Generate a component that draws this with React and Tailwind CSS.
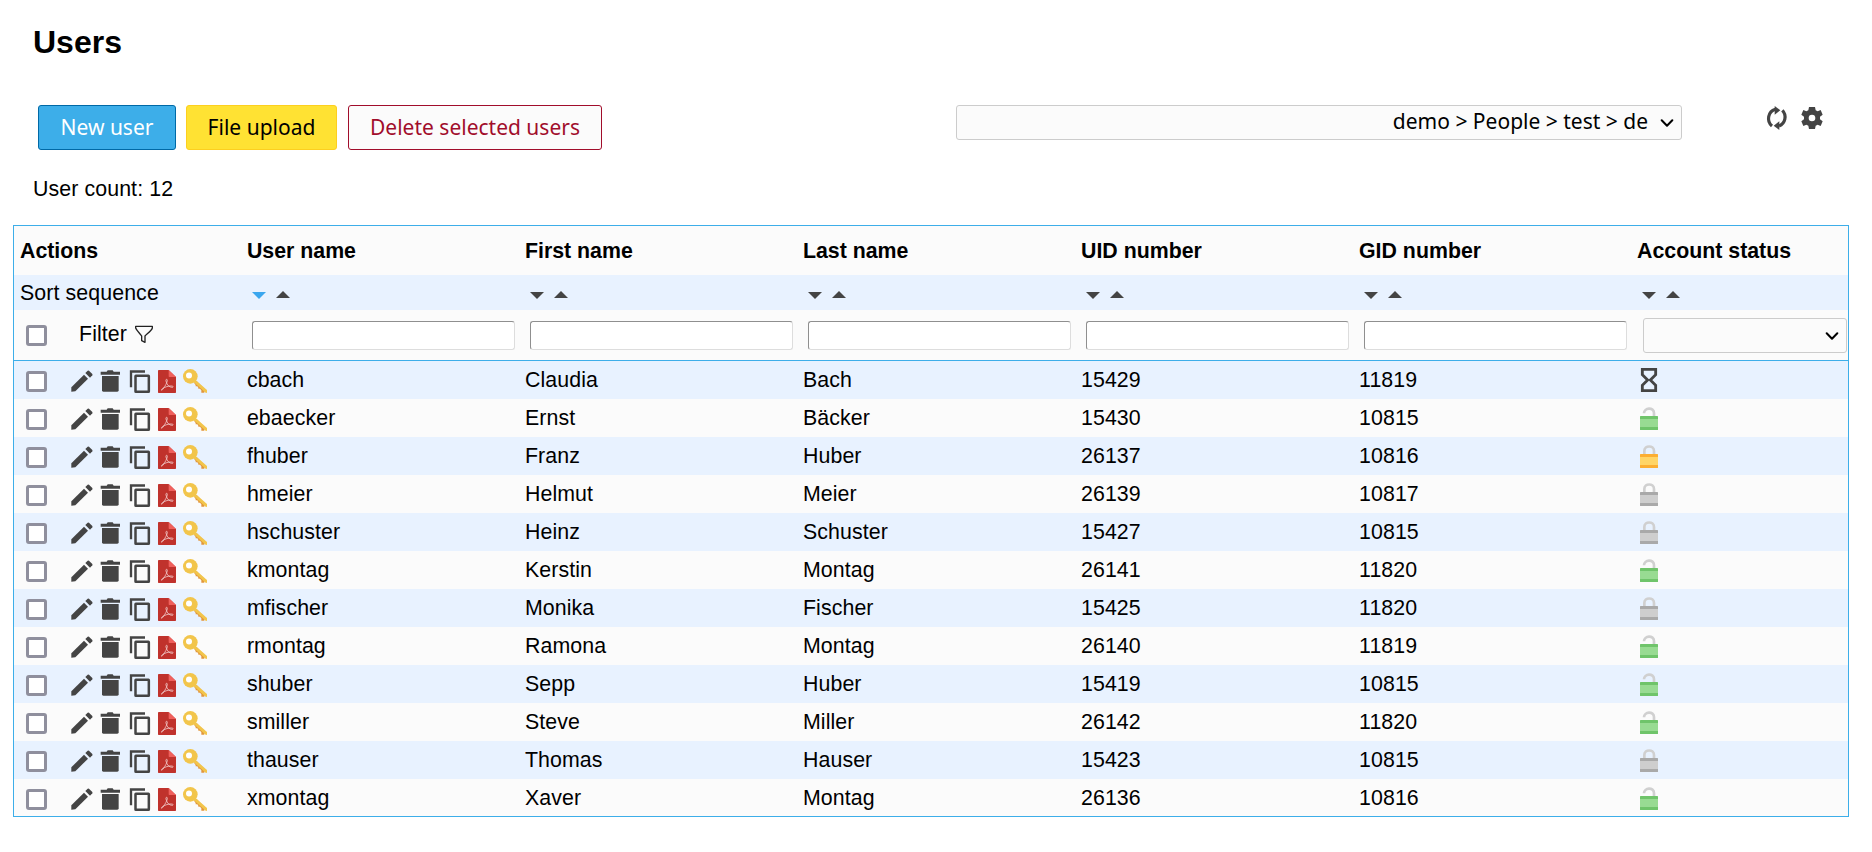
const USERS = [
  ["cbach", "Claudia", "Bach", "15429", "11819", "expired"],
  ["ebaecker", "Ernst", "Bäcker", "15430", "10815", "open"],
  ["fhuber", "Franz", "Huber", "26137", "10816", "partial"],
  ["hmeier", "Helmut", "Meier", "26139", "10817", "locked"],
  ["hschuster", "Heinz", "Schuster", "15427", "10815", "locked"],
  ["kmontag", "Kerstin", "Montag", "26141", "11820", "open"],
  ["mfischer", "Monika", "Fischer", "15425", "11820", "locked"],
  ["rmontag", "Ramona", "Montag", "26140", "11819", "open"],
  ["shuber", "Sepp", "Huber", "15419", "10815", "open"],
  ["smiller", "Steve", "Miller", "26142", "11820", "open"],
  ["thauser", "Thomas", "Hauser", "15423", "10815", "locked"],
  ["xmontag", "Xaver", "Montag", "26136", "10816", "open"],
];

const COLUMNS = ["User name", "First name", "Last name", "UID number", "GID number", "Account status"];

const GRID = "grid grid-cols-[226.3px_repeat(5,278.04px)_1fr]";

function Checkbox() {
  return <span className="block size-[21px] shrink-0 rounded-[3px] border-[3px] border-[#8f8f9d] bg-white" />;
}

function Pencil() {
  return (
    <svg className="size-7 shrink-0" viewBox="24 39 84 84" fill="#444">
      <path d="M34 97L72 59L84 71L46 109L34 110Z" />
      <path d="M76 54L83 47Q85 46 87 47L97 57Q98 59 97 61L90 68Z" />
    </svg>
  );
}

function Trash() {
  return (
    <svg className="size-7 shrink-0" viewBox="108 39 84 84" fill="#444">
      <path d="M122 50H140L143 46H158L161 50H180V59H122Z" />
      <path d="M126 63H176V106Q176 110 172 110H130Q126 110 126 106Z" />
    </svg>
  );
}

function Copy() {
  return (
    <svg className="size-7 shrink-0" viewBox="192 39 84 84" fill="none" stroke="#444">
      <path d="M213 97V49.5H255" strokeWidth="7" />
      <rect x="226.5" y="62.5" width="40" height="48" rx="1" strokeWidth="7.5" />
    </svg>
  );
}

function Pdf() {
  return (
    <svg className="size-7 shrink-0" viewBox="276 39 84 84">
      <path d="M294 47Q294 45 296 45H326L348 66V112Q348 114 346 114H296Q294 114 294 112Z" fill="#c0322c" />
      <path d="M326 45L348 66H328Q326 66 326 64Z" fill="#f0605c" />
      <path d="M320 73C316 73 318 80 321 86C323 91 329 97 337 97C341 97 340 93 335 93C327 92 314 96 307 101C301 106 305 108 309 102C315 94 322 82 322 76Q322 73 320 73Z" fill="none" stroke="#f6d9d8" strokeWidth="2.2" />
    </svg>
  );
}

function Key() {
  return (
    <svg className="size-7 shrink-0" viewBox="360 39 84 84">
      <path d="M402 83L407 90V94H412L415 98V101H420L424 106V113H433V108L441 114L436 104L410 78Z" fill="#e2963c" />
      <path d="M403 72L441 105V113H437L398 79Z" fill="#f2c54b" />
      <circle cx="391" cy="64" r="22" fill="#f2c54b" />
      <circle cx="387" cy="61.5" r="9" fill="#fff" />
    </svg>
  );
}

function Funnel() {
  return (
    <svg className="size-5" viewBox="213 24 60 60" fill="none" stroke="#222" strokeWidth="4" strokeLinejoin="round">
      <path d="M215 28H265V33C263 41 247 52 243 57V76L233 71V57C230 52 218 41 215 33Z" />
    </svg>
  );
}

function SortDown({ active }) {
  return (
    <svg className="h-[7px] w-[14px]" viewBox="0 0 14 7">
      <path d="M0 0H14L7 7Z" fill={active ? "#3aa6ee" : "#444"} />
    </svg>
  );
}

function SortUp() {
  return (
    <svg className="-mt-0.5 h-[7px] w-[14px]" viewBox="0 0 14 7">
      <path d="M0 7H14L7 0Z" fill="#444" />
    </svg>
  );
}

function Chevron() {
  return (
    <svg className="h-2 w-3.5" viewBox="0 0 14 8" fill="none" stroke="#000" strokeWidth="2" strokeLinecap="round" strokeLinejoin="round">
      <path d="M1.7 1.2L7 6.7L12.3 1.2" />
    </svg>
  );
}

const LOCK_COLORS = {
  open: ["#6fc46a", "#98db92"],
  partial: ["#fcae32", "#ffd567"],
  locked: ["#a9a9a9", "#cecece"],
};

function Status({ kind }) {
  if (kind === "expired") {
    return (
      <svg className="h-7 w-[22px]" viewBox="54 0 66 84" fill="none" stroke="#444" strokeWidth="8.500">
        <path d="M67 4H107V20L91 36L107 52V68H67V52L83 36L67 20Z" />
      </svg>
    );
  }
  const [edge, body] = LOCK_COLORS[kind];
  return (
    <svg className="h-7 w-[22px]" viewBox="54 0 66 84">
      <path
        d={kind === "open" ? "M72 22C72 4 102 3 102 21V31" : "M73 31V21C73 3 102 3 102 21V31"}
        fill="none"
        stroke="#d0d0d0"
        strokeWidth="8"
      />
      <rect x="60" y="30" width="54" height="42" rx="1.5" fill={edge} />
      <rect x="60" y="39" width="54" height="24" fill={body} />
    </svg>
  );
}

function Refresh() {
  return (
    <svg className="size-6" viewBox="76 48 72 72">
      <g fill="none" stroke="#444" strokeWidth="9.500">
        <path d="M97 108A29 29 0 0 1 107 58" />
        <path d="M128 61A29 29 0 0 1 118 108" />
      </g>
      <path d="M105 48L122 61L105 74Z" fill="#444" />
      <path d="M119 94L102 107L119 120Z" fill="#444" />
    </svg>
  );
}

function Gear() {
  return (
    <svg className="size-6" viewBox="180 48 72 72" fill="#444" fillRule="evenodd">
      <path d="M207 51H225L227 61L233 64L242 60L248 74L240 80V88L248 94L242 108L233 104L227 107L225 117H207L205 107L199 104L190 108L184 94L192 88V80L184 74L190 60L199 64L205 61ZM216 74A10 10 0 1 0 216 94A10 10 0 1 0 216 74Z" />
    </svg>
  );
}

export default function App() {
  return (
    <div className="h-[852px] w-[1872px] overflow-hidden bg-white font-['Liberation_Sans',Arial,sans-serif] text-[21.333px] text-black">
      <h1 className="pt-6 pl-[33px] text-[32px] leading-9 font-bold">Users</h1>
      <div className="mt-[45px] flex h-[45px] font-['Noto_Sans',sans-serif] text-[21px]">
        <button className="ml-[38px] w-[138px] rounded-[3px] border border-[#0069a6] bg-[#3daee9] text-white">New user</button>
        <button className="ml-2.5 w-[151px] rounded-[3px] border border-[#fdcf1f] bg-[#ffe233]">File upload</button>
        <button className="ml-[11px] w-[254px] rounded-[3px] border border-[#a10d2b] bg-[#fbfbfb] text-[#a10d2b]">Delete selected users</button>
        <div className="ml-[354px] flex h-[35px] w-[726px] items-center justify-end gap-3 rounded-[3px] border border-[#ccc] bg-[#fbfbfb] pr-[7px]">
          <span className="pb-0.5">demo &gt; People &gt; test &gt; de</span>
          <Chevron />
        </div>
        <div className="ml-[83px] flex gap-[11px] pt-px">
          <Refresh />
          <Gear />
        </div>
      </div>
      <p className="mt-[27px] pl-[33px] leading-6 tracking-[0.1px]">User count: 12</p>

      <div className="mt-6 ml-[13px] h-[592px] w-[1836px] overflow-hidden border border-[#3daee9]">
        <div className={`${GRID} h-[49px] items-center bg-[#fbfbfb] pt-[3px] font-bold`}>
          <span className="pl-1.5">Actions</span>
          {COLUMNS.map((name) => (
            <span key={name} className="pl-[6.600px]">{name}</span>
          ))}
        </div>
        <div className={`${GRID} h-[35px] items-center bg-[#e8f2ff] pt-0.5`}>
          <span className="pl-1.5 tracking-[0.1px]">Sort sequence</span>
          {COLUMNS.map((name, i) => (
            <span key={name} className="flex items-center gap-2.5 pt-1 pl-[11.600px]">
              <SortDown active={i === 0} />
              <SortUp />
            </span>
          ))}
        </div>
        <div className={`${GRID} h-[51px] items-center border-b border-[#3daee9] bg-[#fbfbfb] pt-px`}>
          <div className="flex items-center pl-3">
            <Checkbox />
            <span className="mr-2 ml-8 -mt-px tracking-[0.1px]">Filter</span>
            <Funnel />
          </div>
          {COLUMNS.slice(0, 5).map((name) => (
            <span
              key={name}
              className="ml-[11.700px] h-[29px] w-[263px] rounded-[3px] border border-t-[#8f8f8f] border-r-[#ddd] border-b-[#ddd] border-l-[#8f8f8f] bg-white"
            />
          ))}
          <span className="ml-[12.500px] flex h-[35px] w-[204px] items-center justify-end rounded-[3px] border border-[#ccc] bg-[#fbfbfb] pr-[7px]">
            <Chevron />
          </span>
        </div>
        {USERS.map((user) => (
          <div key={user[0]} className={`${GRID} h-[38px] items-center odd:bg-[#fbfbfb] even:bg-[#e8f2ff]`}>
            <div className="flex h-[38px] pl-3">
              <span className="pt-2.5"><Checkbox /></span>
              <span className="ml-[21px] flex pt-[7px]">
                <Pencil />
                <Trash />
                <Copy />
                <Pdf />
                <Key />
              </span>
            </div>
            {user.slice(0, 5).map((value, i) => (
              <span key={i} className="pt-0.5 pl-[6.600px] tracking-[0.1px]">{value}</span>
            ))}
            <span className="h-[38px] pt-[7px] pl-[7.500px]"><Status kind={user[5]} /></span>
          </div>
        ))}
      </div>
    </div>
  );
}
